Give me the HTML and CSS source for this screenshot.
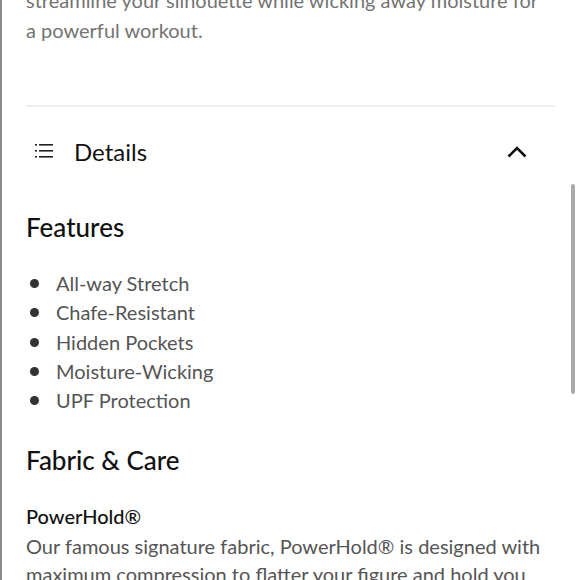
FILE: index.html
```html
<!DOCTYPE html>
<html>
<head>
<meta charset="utf-8">
<link rel="stylesheet" href="styles.css">
</head>
<body>
<div class="page">
  <p class="intro">streamline your silhouette while wicking away moisture for a powerful workout.</p>
  <hr class="divider">
  <div class="acc-head">
    <svg class="list-icon" width="18" height="14" viewBox="0 0 18 14">
      <rect x="0" y="0" width="2" height="1.6" fill="#222"/>
      <rect x="4" y="0" width="14" height="1.6" fill="#222"/>
      <rect x="0" y="6" width="2" height="1.6" fill="#222"/>
      <rect x="4" y="6" width="14" height="1.6" fill="#222"/>
      <rect x="0" y="12" width="2" height="1.6" fill="#222"/>
      <rect x="4" y="12" width="14" height="1.6" fill="#222"/>
    </svg>
    <span class="acc-title">Details</span>
    <svg class="chev" width="20" height="14" viewBox="0 0 20 14">
      <path d="M1.5 12.5 L10 4 L18.5 12.5" fill="none" stroke="#111" stroke-width="2.6"/>
    </svg>
  </div>
  <h2 class="sec">Features</h2>
  <ul class="feats">
    <li>All-way Stretch</li>
    <li>Chafe-Resistant</li>
    <li>Hidden Pockets</li>
    <li>Moisture-Wicking</li>
    <li>UPF Protection</li>
  </ul>
  <h2 class="sec sec2">Fabric &amp; Care</h2>
  <h3 class="fab">PowerHold®</h3>
  <p class="fab-text">Our famous signature fabric, PowerHold® is designed with maximum compression to flatter your figure and hold you in while you work out.</p>
</div>
<div class="scrollbar"></div>
</body>
</html>
```
FILE: styles.css
```css
html, body {
  margin: 0;
  padding: 0;
  background: #fff;
  height: 580px;
  overflow: hidden;
}
body {
  font-family: Lato, "Open Sans", sans-serif;
  position: relative;
}
.page {
  border-left: 2px solid #8a8a8a;
  min-height: 580px;
  padding: 0 25px 0 24px;
  box-sizing: border-box;
  width: 580px;
}
.intro {
  margin: -15px 0 0 0;
  max-width: 520px;
  font-size: 20px;
  line-height: 30px;
  color: #737373;
}
.divider {
  border: 0;
  height: 2px;
  background: #eeeeee;
  margin: 60px 0 0 0;
}
.acc-head {
  display: flex;
  align-items: center;
  height: 88px;
  padding: 0 28px 0 9px;
}
.list-icon { flex: none; }
.acc-title {
  font-size: 24px;
  color: #111;
  margin-left: 21px;
  flex: 1;
}
.chev { flex: none; }
.sec {
  margin: 16px 0 0 0;
  font-size: 26px;
  font-weight: 500;
  color: #111;
  line-height: 32px;
}
.feats {
  list-style: none;
  margin: 26px 0 0 0;
  padding: 0;
}
.feats li {
  font-size: 20px;
  line-height: 29.3px;
  color: #555;
  display: flex;
  align-items: center;
}
.feats li::before {
  content: "";
  width: 9px;
  height: 9px;
  border-radius: 50%;
  background: #333;
  margin: 0 17px 0 4px;
  flex: none;
}
.sec2 { margin-top: 29px; }
.fab {
  margin: 26px 0 0 0;
  font-size: 20px;
  font-weight: 500;
  color: #111;
  line-height: 28px;
}
.fab-text {
  margin: 2px 0 0 0;
  max-width: 515px;
  font-size: 20px;
  line-height: 28px;
  color: #555;
}
.scrollbar {
  position: absolute;
  left: 571px;
  top: 184px;
  width: 4px;
  height: 210px;
  border-radius: 2px;
  background: #aaaaaa;
}
```
